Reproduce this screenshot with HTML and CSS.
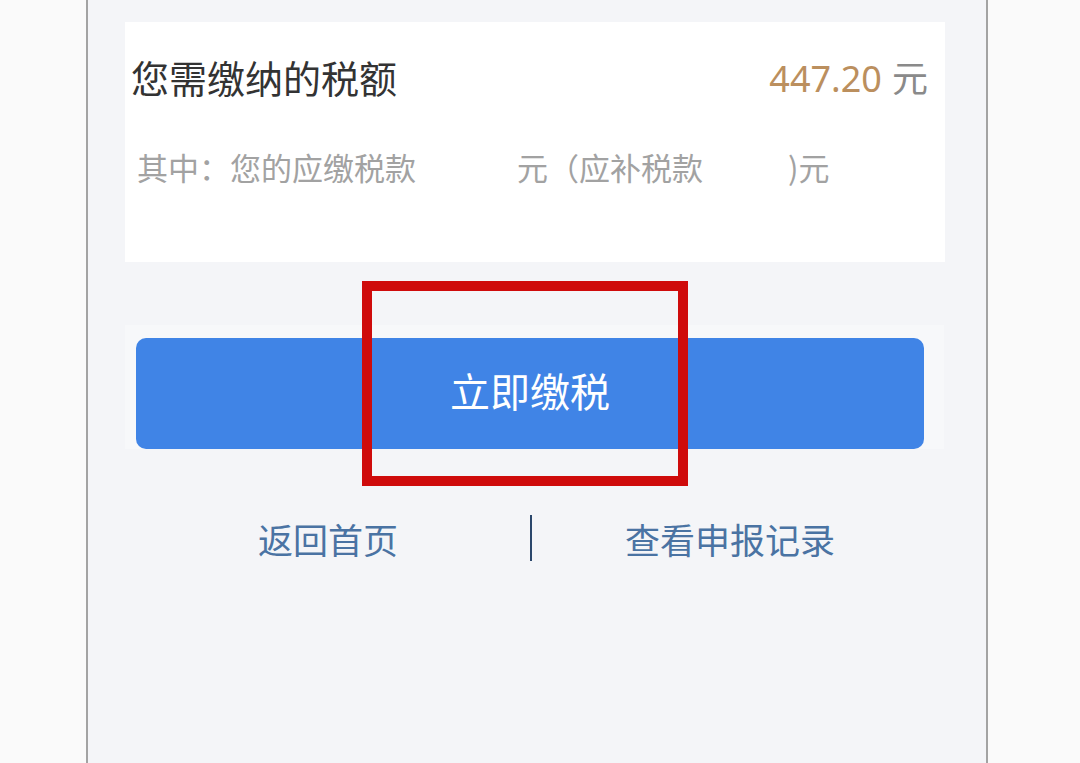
FILE: index.html
```html
<!DOCTYPE html>
<html lang="zh-CN">
<head>
  <meta charset="UTF-8">
  <meta name="viewport" content="width=device-width, initial-scale=1.0">
  <title>立即缴税</title>
  <link rel="stylesheet" href="styles.css">
</head>
<body>
  <div class="frame">
    <div class="card">
      <div class="row-total">
        <span class="title">您需缴纳的税额</span>
        <span class="amount"><span class="num">447.20</span> 元</span>
      </div>
      <div class="row-detail">
        <span>其中：您的应缴税款</span>
        <span class="blank-1">元（应补税款</span>
        <span class="blank-2">)元</span>
      </div>
    </div>

    <div class="action">
      <button class="pay-btn">立即缴税</button>
    </div>

    <div class="links">
      <a class="link" href="#">返回首页</a>
      <span class="sep"></span>
      <a class="link" href="#">查看申报记录</a>
    </div>

    <div class="highlight"></div>
  </div>
</body>
</html>
```

FILE: styles.css
```css
body {
  margin: 0;
  background-color: #fafafa;
  font-family: "Noto Sans CJK SC", "Noto Sans", sans-serif;
}
.frame {
  position: relative;
  margin-left: 86px;
  width: 898px;
  height: 763px;
  border-left: 2px solid #a3a3a3;
  border-right: 2px solid #a3a3a3;
  background-color: #f4f5f8;
  padding-top: 22px;
  box-sizing: content-box;
}
.card {
  margin: 0 41px 0 37px;
  height: 240px;
  background-color: #fff;
  box-sizing: border-box;
  padding: 0 17px 0 6px;
}
.row-total {
  display: flex;
  justify-content: space-between;
  align-items: center;
  height: 108px;
}
.title {
  font-size: 38px;
  color: #333;
}
.amount {
  font-size: 36px;
  color: #8a8a8a;
}
.amount .num {
  font-family: "Noto Sans", sans-serif;
  color: #bb8f5e;
  margin-right: 2px;
}
.row-detail {
  display: flex;
  align-items: center;
  height: 72px;
  padding-left: 6px;
  font-size: 31px;
  color: #a2a2a2;
}
.blank-1 {
  margin-left: 101px;
}
.blank-2 {
  margin-left: 85px;
}
.action {
  margin: 63px 42px 0 37px;
  padding: 13px 20px 0 11px;
  background-color: #f7f8fa;
}
.pay-btn {
  display: block;
  width: 100%;
  height: 111px;
  border: none;
  border-radius: 10px;
  background-color: #4084e6;
  color: #fff;
  font-family: "Noto Sans CJK SC", sans-serif;
  font-size: 40px;
  padding: 0 0 8px;
}
.links {
  display: flex;
  align-items: center;
  margin-top: 44px;
  height: 90px;
  padding-left: 170px;
}
.link {
  font-size: 35px;
  color: #4a73a3;
  text-decoration: none;
}
.sep {
  width: 2px;
  height: 46px;
  background-color: #2b476c;
  margin: 0 93px 0 132px;
}
.highlight {
  position: absolute;
  left: 274px;
  top: 281px;
  width: 326px;
  height: 205px;
  box-sizing: border-box;
  border: 10px solid #cf0b0b;
}
```
